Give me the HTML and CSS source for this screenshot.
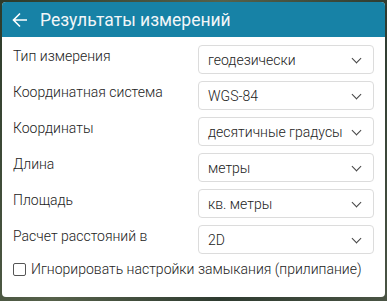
FILE: index.html
```html
<!DOCTYPE html>
<html lang="ru">

<head>
    <meta charset="UTF-8">
    <meta name="viewport" content="width=device-width, initial-scale=1.0">
    <title>Результаты измерений</title>
    <link rel="stylesheet" href="styles.css">
</head>

<body>
    <div class="panel">
        <div class="panel-header">
            <svg class="back" width="18" height="18" viewBox="0 0 18 18">
                <path d="M16 9H2.5M9 2.5L2.5 9L9 15.5" fill="none" stroke="#fff" stroke-width="1.6" />
            </svg>
            <span class="title">Результаты измерений</span>
        </div>
        <div class="panel-body">
            <div class="row">
                <div class="label">Тип измерения</div>
                <div class="select">геодезически<span class="chevron"></span></div>
            </div>
            <div class="row">
                <div class="label">Координатная система</div>
                <div class="select">WGS-84<span class="chevron"></span></div>
            </div>
            <div class="row">
                <div class="label">Координаты</div>
                <div class="select">десятичные градусы<span class="chevron"></span></div>
            </div>
            <div class="row">
                <div class="label">Длина</div>
                <div class="select">метры<span class="chevron"></span></div>
            </div>
            <div class="row">
                <div class="label">Площадь</div>
                <div class="select">кв. метры<span class="chevron"></span></div>
            </div>
            <div class="row">
                <div class="label">Расчет расстояний в</div>
                <div class="select">2D<span class="chevron"></span></div>
            </div>
            <label class="check">
                <span class="box"></span>
                Игнорировать настройки замыкания (прилипание)
            </label>
        </div>
    </div>
</body>

</html>
```

FILE: styles.css
```css
body {
    margin: 0;
    width: 387px;
    height: 301px;
    overflow: hidden;
    background: #3c4a36;
    background: linear-gradient(120deg, #2c3a2a 0%, #56614a 40%, #2e3b30 70%, #4a5444 100%);
    font-family: Roboto, "Liberation Sans", sans-serif;
    padding: 2px 2px 0 2px;
    box-sizing: border-box;
}

.panel {
    width: 383px;
    height: 295px;
    background: #fff;
    border-radius: 4px;
    overflow: hidden;
}

.panel-header {
    height: 35px;
    background-color: #1782a6;
    display: flex;
    align-items: center;
    padding-left: 9px;
    color: #fff;
}

.back {
    margin-right: 11px;
}

.title {
    font-size: 17.5px;
    color: #f2f6f8;
}

.panel-body {
    padding: 8px 11px 0 11px;
}

.row {
    display: flex;
    justify-content: space-between;
    height: 29px;
    margin-bottom: 7px;
}

.label {
    font-size: 14px;
    font-weight: 300;
    color: #222;
    padding-top: 3px;
}

.select {
    width: 176px;
    height: 29px;
    box-sizing: border-box;
    border: 1px solid #dcdcdc;
    border-radius: 4px;
    display: flex;
    align-items: center;
    padding-left: 9px;
    font-size: 14px;
    font-weight: 300;
    color: #222;
    position: relative;
}

.chevron {
    position: absolute;
    right: 13px;
    top: 9px;
    width: 6px;
    height: 6px;
    border-right: 1.5px solid #444;
    border-bottom: 1.5px solid #444;
    transform: rotate(45deg);
}

.check {
    display: flex;
    align-items: center;
    font-size: 14px;
    font-weight: 300;
    color: #222;
    margin-top: 0;
}

.box {
    width: 11px;
    height: 11px;
    border: 1px solid #555;
    border-radius: 2px;
    margin-right: 5px;
}
```
